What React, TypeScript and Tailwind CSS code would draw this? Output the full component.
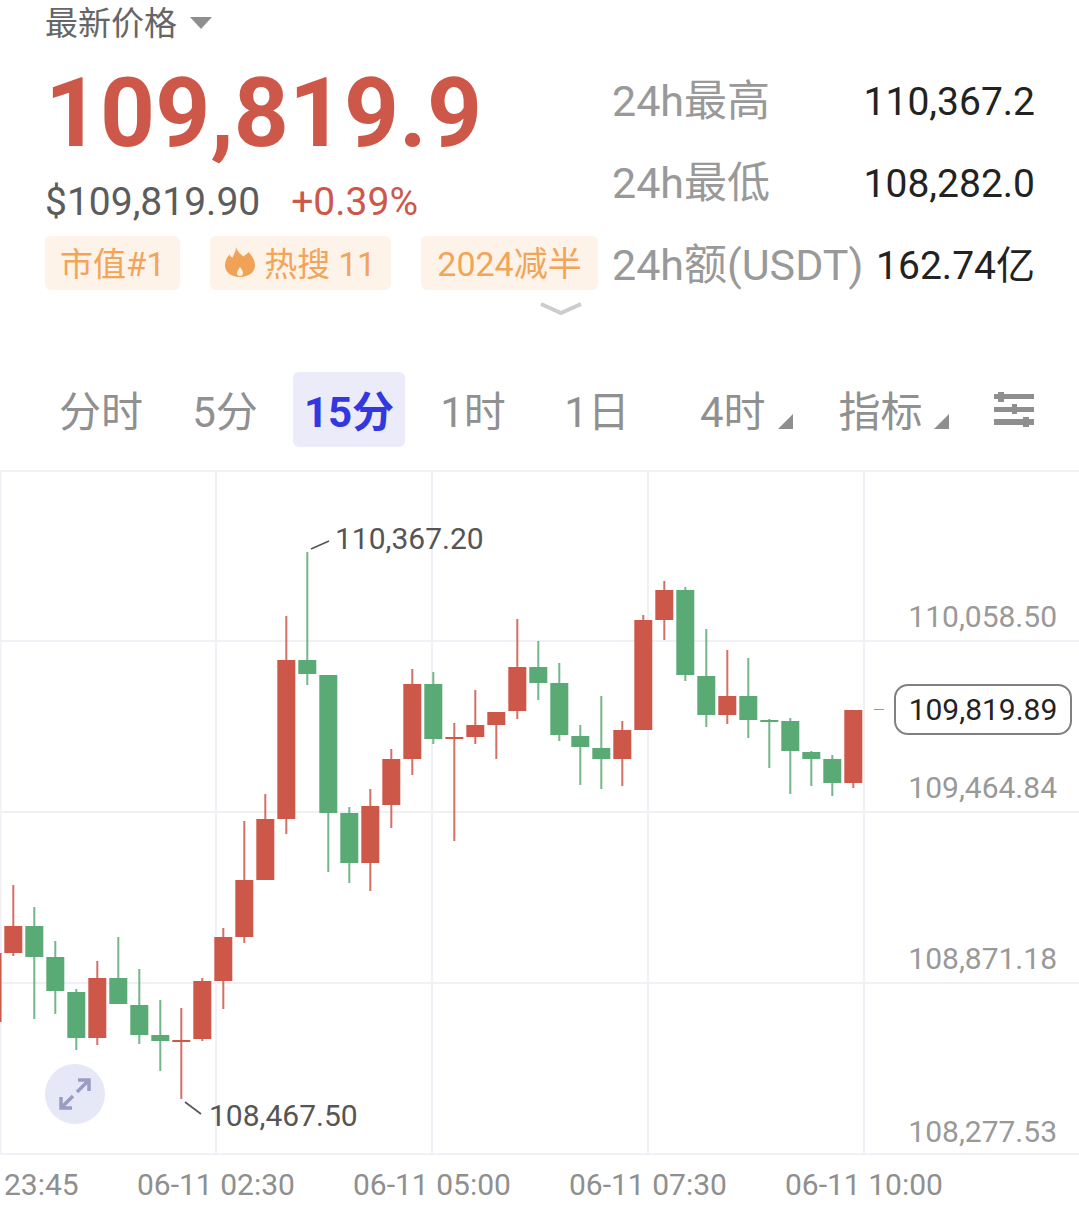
import { useMemo } from "react";

type Candle = [dir: "up" | "down", high: number, top: number, bottom: number, low: number];

const candles: Candle[] = [
  ["up", 885, 926, 953, 956],
  ["down", 907, 926, 957, 1019],
  ["down", 941, 957, 991, 1014],
  ["down", 989, 992, 1038, 1050],
  ["up", 961, 978, 1038, 1045],
  ["down", 937, 978, 1004, 1004],
  ["down", 969, 1005, 1035, 1044],
  ["down", 1000, 1035, 1041, 1071],
  ["up", 1008, 1040, 1041, 1099],
  ["up", 978, 981, 1039, 1041],
  ["up", 928, 937, 981, 1009],
  ["up", 821, 880, 937, 943],
  ["up", 794, 819, 880, 880],
  ["up", 616, 660, 819, 834],
  ["down", 552, 660, 674, 685],
  ["down", 675, 675, 813, 872],
  ["down", 807, 813, 863, 883],
  ["up", 789, 806, 863, 891],
  ["up", 749, 759, 805, 828],
  ["up", 669, 684, 759, 775],
  ["down", 672, 684, 739, 744],
  ["up", 723, 737, 739, 841],
  ["up", 690, 725, 737, 744],
  ["up", 712, 712, 725, 759],
  ["up", 619, 667, 711, 719],
  ["down", 641, 667, 683, 700],
  ["down", 663, 683, 735, 741],
  ["down", 725, 736, 747, 785],
  ["down", 696, 748, 759, 789],
  ["up", 721, 730, 759, 786],
  ["up", 615, 620, 730, 730],
  ["up", 581, 590, 620, 640],
  ["down", 587, 590, 675, 681],
  ["down", 629, 676, 715, 727],
  ["up", 650, 696, 715, 724],
  ["down", 658, 696, 720, 738],
  ["down", 719, 720, 722, 768],
  ["down", 718, 721, 751, 794],
  ["down", 751, 752, 759, 786],
  ["down", 755, 759, 783, 796],
  ["up", 710, 710, 783, 788],
];

const chartTop = 470;

const priceLabels = [
  { text: "110,058.50", y: 599 },
  { text: "109,464.84", y: 770 },
  { text: "108,871.18", y: 941 },
  { text: "108,277.53", y: 1114 },
];

const timeLabels = [
  { text: "23:45", left: 4 },
  { text: "06-11 02:30", left: 137 },
  { text: "06-11 05:00", left: 353 },
  { text: "06-11 07:30", left: 569 },
  { text: "06-11 10:00", left: 785 },
];

const tabs = ["分时", "5分", "15分", "1时", "1日"];

function CornerMark() {
  return (
    <svg viewBox="0 0 15 15" className="mt-[17px] h-[15px] w-[15px] fill-[#8f8f8f]">
      <path d="M15 0V15H0Z" />
    </svg>
  );
}

function Tag({ children, className }: { children: React.ReactNode; className: string }) {
  return (
    <div className={`flex h-[54px] items-center justify-center rounded-[6px] bg-[#fdf3e9] pt-[3px] text-[33px] text-[#f2a458] ${className}`}>
      {children}
    </div>
  );
}

function StatRow({ label, value }: { label: string; value: string }) {
  return (
    <div className="flex h-[41px] items-center justify-between whitespace-nowrap">
      <span className="text-[43px] text-[#999999]">{label}</span>
      <span className="-mr-[1px] pt-[2px] text-[39px] text-[#222222]">{value}</span>
    </div>
  );
}

function CandleChart() {
  const rects = useMemo(
    () =>
      candles.map(([dir, high, top, bottom, low], i) => {
        const cx = 13.3 + i * 21;
        const color = dir === "up" ? "#cd584a" : "#5aaa76";
        return (
          <g key={i} fill={color}>
            <rect x={cx - 1} y={high - chartTop} width={2} height={low - high} opacity={0.85} />
            <rect x={cx - 9} y={top - chartTop} width={18} height={Math.max(bottom - top, 2)} />
          </g>
        );
      }),
    [],
  );

  return (
    <svg viewBox="0 0 1079 685" className="absolute inset-0 h-[685px] w-[1079px]">
      <g fill="#f0f0f6">
        <rect x="0" y="0" width="1079" height="2" />
        <rect x="0" y="170" width="1079" height="2" />
        <rect x="0" y="341" width="1079" height="2" />
        <rect x="0" y="512" width="1079" height="2" />
        <rect x="0" y="683" width="1079" height="2" />
        <rect x="0" y="0" width="1.5" height="685" />
        <rect x="215" y="0" width="2" height="685" />
        <rect x="431" y="0" width="2" height="685" />
        <rect x="647" y="0" width="2" height="685" />
        <rect x="863" y="0" width="2" height="685" />
      </g>
      <rect x="0" y="483" width="1.5" height="69" fill="#cd584a" />
      {rects}
      <path d="M311 79L329 71" stroke="#555555" strokeWidth="1.6" />
      <path d="M185 632L201 644" stroke="#555555" strokeWidth="1.6" />
      <path d="M874 239.5H884" stroke="#999999" strokeWidth="1" />
    </svg>
  );
}

export default function App() {
  return (
    <div
      className="relative h-[1207px] w-[1079px] overflow-hidden bg-white"
      style={{ fontFamily: 'Roboto, "Noto Sans CJK SC", sans-serif' }}
    >
      <div className="flex h-[372px] pl-[45px] pr-[45px]">
        <div className="w-[567px] shrink-0">
          <div className="flex h-[46px] items-center gap-[13px] text-[33px] leading-none text-[#666666]">
            <span>最新价格</span>
            <svg viewBox="0 0 22 12" className="h-[12px] w-[22px] fill-[#8f8f8f]">
              <path d="M0 0H22L11 12Z" />
            </svg>
          </div>
          <div className="mt-[19px] text-[96px] font-bold leading-[96px] text-[#cd584a]">109,819.9</div>
          <div className="mt-[19px] flex h-[44px] items-center gap-[31px] whitespace-nowrap text-[39px]">
            <span className="text-[#5c5c5c]">$109,819.90</span>
            <span className="text-[#cd584a]">+0.39%</span>
          </div>
          <div className="mt-[12px] flex gap-[30px] whitespace-nowrap">
            <Tag className="w-[135px]">市值#1</Tag>
            <Tag className="w-[181px] gap-[9px]">
              <svg viewBox="0 0 30 30" className="-mt-[5px] h-[30px] w-[30px]">
                <path
                  fill="#f0a356"
                  d="M11 0C12 4 15 7 18.5 9.5C20 8 22 7 23.5 5C27 9 30 13 30 18.5C30 25 24 30 15 30C6 30 0 25 0 18.5C0 14 2 10 4.5 7.5C5 9 6 10 7.5 10.5C9 7 11 4 11 0Z"
                />
                <path fill="#fdf3e9" d="M15 20C17 22.5 18 24.5 18 26C18 28 17 29 15 29C13 29 12 28 12 26C12 24.5 13.5 22.5 15 20Z" />
              </svg>
              <span>热搜 11</span>
            </Tag>
            <Tag className="w-[177px]">
              <span className="text-[34px]">2024减半</span>
            </Tag>
          </div>
          <div className="mt-[12px] flex justify-end pr-[30px]">
            <svg viewBox="0 0 42 14" className="h-[14px] w-[42px] fill-none stroke-[#cccccc] stroke-[4]">
              <path d="M1 2L21 11L41 2" />
            </svg>
          </div>
        </div>
        <div className="flex-1 pt-[81px]">
          <div className="flex flex-col gap-[41px]">
            <StatRow label="24h最高" value="110,367.2" />
            <StatRow label="24h最低" value="108,282.0" />
            <StatRow label="24h额(USDT)" value="162.74亿" />
          </div>
        </div>
      </div>

      <div className="flex h-[98px] items-start pl-[39px] text-[42px] leading-none text-[#909090]">
        {tabs.map((tab) =>
          tab === "15分" ? (
            <div key={tab} className="w-[124px] px-[6px]">
              <div className="flex h-[75px] items-center justify-center rounded-[6px] bg-[#ebebfa] pt-[6px] font-bold text-[#3237e0]">
                {tab}
              </div>
            </div>
          ) : (
            <div key={tab} className="flex h-[75px] w-[124px] items-center justify-center pt-[6px]">
              {tab}
            </div>
          ),
        )}
        <div className="ml-[41px] flex h-[75px] items-center gap-[12px] pt-[6px]">
          <span>4时</span>
          <CornerMark />
        </div>
        <div className="ml-[46px] flex h-[75px] items-center gap-[11px] pt-[6px]">
          <span>指标</span>
          <CornerMark />
        </div>
        <div className="ml-[45px] flex h-[75px] items-center">
          <svg viewBox="0 0 40 35" className="h-[35px] w-[40px] fill-[#8f8f8f]">
            <rect x="0" y="2" width="40" height="5" />
            <rect x="4" y="0" width="6" height="10" />
            <rect x="0" y="15" width="40" height="5" />
            <rect x="18" y="12" width="5" height="10" />
            <rect x="0" y="27" width="40" height="6" />
            <rect x="29" y="25" width="6" height="10" />
          </svg>
        </div>
      </div>

      <div className="relative h-[685px] w-[1079px]">
        <CandleChart />
        <span className="absolute left-[335px] top-[51px] text-[30px] leading-[36px] text-[#555555]">110,367.20</span>
        <span className="absolute left-[209px] top-[628px] text-[30px] leading-[36px] text-[#555555]">108,467.50</span>
        {priceLabels.map((label) => (
          <span
            key={label.text}
            className="absolute right-[22px] text-[30px] leading-[36px] text-[#999999]"
            style={{ top: label.y - chartTop }}
          >
            {label.text}
          </span>
        ))}
        <div className="absolute left-[894px] top-[214px] flex h-[51px] w-[178px] items-center justify-center rounded-[14px] border-2 border-[#808080] bg-white text-[30px] text-[#222222]">
          109,819.89
        </div>
        <div className="absolute left-[45px] top-[594px] flex h-[60px] w-[60px] items-center justify-center rounded-full bg-[#e6e8f8]">
          <svg viewBox="0 0 36 36" className="h-[36px] w-[36px] fill-none stroke-[#9a9cc4] stroke-[3.5]">
            <path d="M20 16L32 4M21 4H32V15" />
            <path d="M16 20L4 32M4 21V32H15" />
          </svg>
        </div>
      </div>

      <div className="relative h-[52px] text-[30px] text-[#8f8f8f]">
        {timeLabels.map((label) => (
          <span key={label.text} className="absolute top-[12px] whitespace-nowrap leading-[36px]" style={{ left: label.left }}>
            {label.text}
          </span>
        ))}
      </div>
    </div>
  );
}
